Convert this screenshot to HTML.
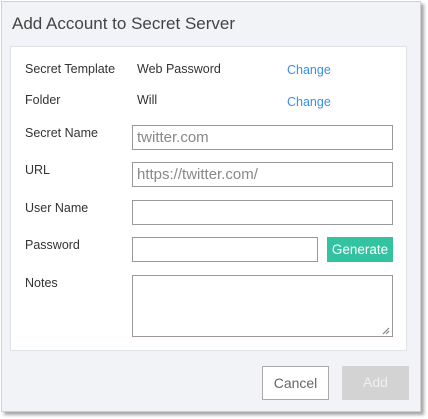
<!DOCTYPE html>
<html><head><style>
*{box-sizing:border-box;margin:0;padding:0}
body{width:428px;height:419px;background:#fff;font-family:"Liberation Sans",sans-serif;position:relative;overflow:hidden}
.dlg{position:absolute;left:1px;top:1px;width:420px;height:411px;background:#f2f3f6;border:1px solid #d0d0d0;box-shadow:3px 3px 3px rgba(0,0,0,.35)}
.t{position:absolute;left:12px;top:14px;font-size:17px;color:#444}
.panel{position:absolute;left:10px;top:46px;width:397px;height:305px;background:#fff;border:1px solid #dde2e8}
.l{position:absolute;left:25px;font-size:12.5px;color:#333}
.v{position:absolute;left:137px;font-size:12.5px;color:#333}
.c{position:absolute;left:287px;font-size:12.5px;color:#3a8ee6}
.in{position:absolute;left:132px;width:261px;height:25px;border:1px solid #999;background:#fff;font-size:15px;color:#888;padding:3px 4px}
.btn{position:absolute;font-size:14px;text-align:center;line-height:33px;height:34px;width:67px;top:366px}
</style></head><body>
<div class="dlg"></div>
<div class="t">Add Account to Secret Server</div>
<div class="panel"></div>
<div class="l" style="top:62px">Secret Template</div><div class="v" style="top:62px">Web Password</div><div class="c" style="top:63px">Change</div>
<div class="l" style="top:93px">Folder</div><div class="v" style="top:93px">Will</div><div class="c" style="top:95px">Change</div>
<div class="l" style="top:126px">Secret Name</div><div class="in" style="top:125px">twitter.com</div>
<div class="l" style="top:163px">URL</div><div class="in" style="top:162px">https://twitter.com/</div>
<div class="l" style="top:201px">User Name</div><div class="in" style="top:200px"></div>
<div class="l" style="top:238px">Password</div><div class="in" style="top:237px;width:186px"></div>
<div style="position:absolute;left:327px;top:237px;width:66px;height:25px;background:#33c3a0;color:#fff;font-size:13.5px;text-align:center;line-height:25px">Generate</div>
<div class="l" style="top:276px">Notes</div><div class="in" style="top:275px;height:62px"></div>
<svg style="position:absolute;left:382px;top:327px" width="8" height="8"><path d="M1 7L7 1M4 7L7 4" stroke="#777" stroke-width="1"/></svg>
<div class="btn" style="left:262px;background:#fff;border:1px solid #aaa;color:#666">Cancel</div>
<div class="btn" style="left:342px;background:#d3d3d3;color:#f0f0f0">Add</div>
</body></html>
